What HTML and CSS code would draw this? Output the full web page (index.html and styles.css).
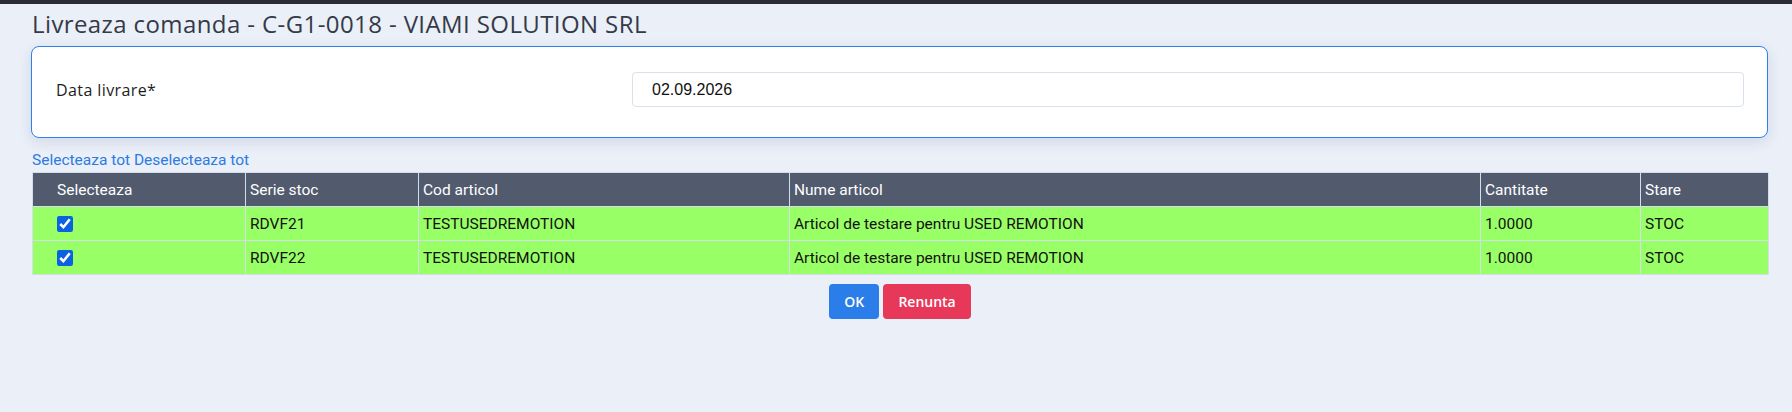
FILE: index.html
```html
<!DOCTYPE html>
<html lang="ro">
<head>
    <meta charset="UTF-8">
    <meta name="viewport" content="width=device-width, initial-scale=1.0">
    <title>Livreaza comanda</title>
    <link rel="stylesheet" href="styles.css">
</head>
<body>
    <div class="topbar"></div>
    <div class="page">
        <h1 class="page-title">Livreaza comanda - C-G1-0018 - VIAMI SOLUTION SRL</h1>

        <div class="card">
            <div class="form-row">
                <label for="dataLivrare">Data livrare*</label>
                <input type="text" id="dataLivrare" value="02.09.2026">
            </div>
        </div>

        <div class="select-links">
            <a href="#" onclick="bifeazaTot(true); return false;">Selecteaza tot</a>
            <a href="#" onclick="bifeazaTot(false); return false;">Deselecteaza tot</a>
        </div>

        <table class="grid">
            <colgroup>
                <col style="width: 213px">
                <col style="width: 173px">
                <col style="width: 371px">
                <col style="width: 691px">
                <col style="width: 160px">
                <col style="width: 128px">
            </colgroup>
            <thead>
                <tr>
                    <th class="col-check">Selecteaza</th>
                    <th>Serie stoc</th>
                    <th>Cod articol</th>
                    <th>Nume articol</th>
                    <th>Cantitate</th>
                    <th>Stare</th>
                </tr>
            </thead>
            <tbody>
                <tr class="row-ok">
                    <td class="col-check"><input type="checkbox" class="sel" checked></td>
                    <td>RDVF21</td>
                    <td>TESTUSEDREMOTION</td>
                    <td>Articol de testare pentru USED REMOTION</td>
                    <td>1.0000</td>
                    <td>STOC</td>
                </tr>
                <tr class="row-ok">
                    <td class="col-check"><input type="checkbox" class="sel" checked></td>
                    <td>RDVF22</td>
                    <td>TESTUSEDREMOTION</td>
                    <td>Articol de testare pentru USED REMOTION</td>
                    <td>1.0000</td>
                    <td>STOC</td>
                </tr>
            </tbody>
        </table>

        <div class="actions">
            <button class="btn btn-primary">OK</button>
            <button class="btn btn-danger">Renunta</button>
        </div>
    </div>

    <script>
        function bifeazaTot(valoare) {
            document.querySelectorAll('.sel').forEach(function (cb) {
                cb.checked = valoare;
            });
        }
    </script>
</body>
</html>
```

FILE: styles.css
```css
body {
    margin: 0;
    background-color: #eaeff8;
    font-family: "Open Sans", Arial, sans-serif;
    color: #212529;
}
.topbar {
    height: 4px;
    background-color: #2a2b35;
}
.page {
    padding: 0 24px 0 32px;
}
.page-title {
    margin: 0;
    padding: 4px 0 7px;
    font-size: 24px;
    font-weight: 500;
    letter-spacing: 0.4px;
    line-height: 31px;
    color: #343a48;
}
.card {
    background-color: white;
    border: 1px solid #2f80ed;
    border-radius: 8px;
    box-shadow: 0 4px 14px rgba(40, 60, 100, 0.12);
    padding: 25px 23px 30px 24px;
    margin-left: -1px;
}
.form-row {
    display: grid;
    grid-template-columns: 576px 1fr;
    align-items: center;
}
.form-row label {
    font-size: 16px;
    letter-spacing: 0.4px;
    color: #1d1d1d;
}
.form-row input {
    height: 35px;
    box-sizing: border-box;
    border: 1px solid #d9e1ec;
    border-radius: 4px;
    padding: 0 19px;
    font-family: "Liberation Sans", Arial, sans-serif;
    font-size: 16px;
    color: #111;
}
.select-links {
    margin: 12px 0 2px;
    font-family: Roboto, sans-serif;
    font-size: 15.5px;
    line-height: 20px;
}
.select-links a {
    color: #2a7be4;
    text-decoration: none;
}
.grid {
    width: 100%;
    table-layout: fixed;
    border-collapse: collapse;
    font-family: Roboto, sans-serif;
    font-size: 15.5px;
}
.grid th, .grid td {
    height: 33px;
    padding: 0 4px;
    border: 1px solid #d3deed;
    text-align: left;
    vertical-align: middle;
}
.grid th {
    background-color: #525a6e;
    color: white;
    font-weight: 400;
}
.grid td {
    color: #111;
}
.grid .col-check {
    padding-left: 24px;
}
.row-ok td {
    background-color: #99ff66;
}
.sel {
    width: 16px;
    height: 16px;
    margin: 0;
    vertical-align: middle;
    accent-color: #0b62e0;
}
.actions {
    margin-top: 9px;
    text-align: center;
}
.btn {
    height: 35px;
    padding: 0 15px;
    border: none;
    border-radius: 4px;
    color: white;
    font-family: "Open Sans", Arial, sans-serif;
    font-size: 14px;
    font-weight: 600;
    cursor: pointer;
}
.btn-primary {
    background-color: #2b7de9;
}
.btn-danger {
    background-color: #e8385a;
}
```
